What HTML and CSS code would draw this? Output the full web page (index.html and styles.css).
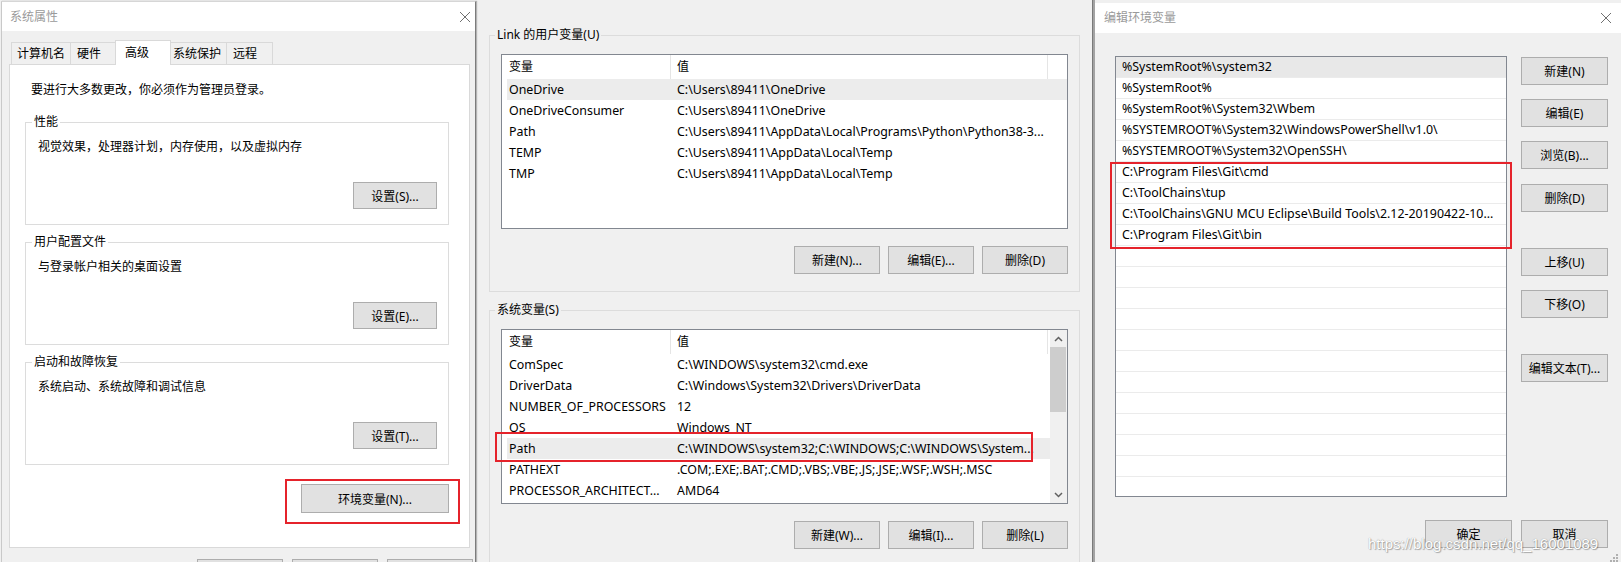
FILE: index.html
```html
<!DOCTYPE html>
<html>
<head>
<meta charset="utf-8">
<title>系统属性 - 环境变量</title>
<link rel="stylesheet" href="styles.css">
</head>
<body>
<div class="desk">

  <!-- 系统属性 -->
  <div class="win win-sys">
    <div class="titlebar">
      <span class="title">系统属性</span>
      <svg class="close" width="10" height="10" viewBox="0 0 10 10"><path d="M0 0L10 10M10 0L0 10"/></svg>
    </div>
    <div class="sys-body">
      <div class="tabs">
        <div class="tab t-name">计算机名</div>
        <div class="tab t-hw">硬件</div>
        <div class="tab active">高级</div>
        <div class="tab t-prot">系统保护</div>
        <div class="tab t-remote">远程</div>
      </div>
      <div class="tab-panel">
        <p class="intro">要进行大多数更改，你必须作为管理员登录。</p>
        <div class="group">
          <span class="legend">性能</span>
          <p class="group-text">视觉效果，处理器计划，内存使用，以及虚拟内存</p>
          <button class="btn">设置(S)...</button>
        </div>
        <div class="group">
          <span class="legend">用户配置文件</span>
          <p class="group-text">与登录帐户相关的桌面设置</p>
          <button class="btn">设置(E)...</button>
        </div>
        <div class="group">
          <span class="legend">启动和故障恢复</span>
          <p class="group-text">系统启动、系统故障和调试信息</p>
          <button class="btn">设置(T)...</button>
        </div>
        <div class="mark mark-env"><button class="btn btn-env">环境变量(N)...</button></div>
      </div>
      <!-- OK / Cancel / Apply, cut off by the bottom edge -->
      <div class="dlg-btns">
        <button class="btn"></button>
        <button class="btn"></button>
        <button class="btn"></button>
      </div>
    </div>
  </div>

  <!-- 环境变量 -->
  <div class="win win-env">
    <div class="varbox">
      <span class="legend">Link 的用户变量(U)</span>
      <div class="lv">
        <div class="lv-main">
          <div class="lv-head"><span>变量</span><span>值</span></div>
          <div class="lv-row sel"><span>OneDrive</span><span>C:\Users\89411\OneDrive</span></div>
          <div class="lv-row"><span>OneDriveConsumer</span><span>C:\Users\89411\OneDrive</span></div>
          <div class="lv-row"><span>Path</span><span>C:\Users\89411\AppData\Local\Programs\Python\Python38-3...</span></div>
          <div class="lv-row"><span>TEMP</span><span>C:\Users\89411\AppData\Local\Temp</span></div>
          <div class="lv-row"><span>TMP</span><span>C:\Users\89411\AppData\Local\Temp</span></div>
        </div>
      </div>
      <div class="lv-btns">
        <button class="btn">新建(N)...</button>
        <button class="btn">编辑(E)...</button>
        <button class="btn">删除(D)</button>
      </div>
    </div>
    <div class="varbox">
      <span class="legend">系统变量(S)</span>
      <div class="lv">
        <div class="lv-main">
          <div class="lv-head"><span>变量</span><span>值</span></div>
          <div class="lv-row"><span>ComSpec</span><span>C:\WINDOWS\system32\cmd.exe</span></div>
          <div class="lv-row"><span>DriverData</span><span>C:\Windows\System32\Drivers\DriverData</span></div>
          <div class="lv-row"><span>NUMBER_OF_PROCESSORS</span><span>12</span></div>
          <div class="lv-row"><span>OS</span><span>Windows_NT</span></div>
          <div class="lv-row sel"><span>Path</span><span>C:\WINDOWS\system32;C:\WINDOWS;C:\WINDOWS\System...</span></div>
          <div class="lv-row"><span>PATHEXT</span><span>.COM;.EXE;.BAT;.CMD;.VBS;.VBE;.JS;.JSE;.WSF;.WSH;.MSC</span></div>
          <div class="lv-row"><span>PROCESSOR_ARCHITECT...</span><span>AMD64</span></div>
        </div>
        <div class="scroll">
          <div class="sb-btn"><svg width="9" height="6" viewBox="0 0 9 6"><path d="M1 5L4.5 1.5L8 5"/></svg></div>
          <div class="sb-thumb"></div>
          <div class="sb-track"></div>
          <div class="sb-btn"><svg width="9" height="6" viewBox="0 0 9 6"><path d="M1 1L4.5 4.5L8 1"/></svg></div>
        </div>
        <div class="mark mark-path"></div>
      </div>
      <div class="lv-btns">
        <button class="btn">新建(W)...</button>
        <button class="btn">编辑(I)...</button>
        <button class="btn">删除(L)</button>
      </div>
    </div>
  </div>

  <div class="edge"></div>

  <!-- 编辑环境变量 -->
  <div class="win win-edit">
    <div class="titlebar">
      <span class="title">编辑环境变量</span>
      <svg class="close" width="10" height="10" viewBox="0 0 10 10"><path d="M0 0L10 10M10 0L0 10"/></svg>
    </div>
    <div class="edit-body">
      <div class="edit-main">
        <div class="pathlist">
          <div class="pl-rows">
            <div class="pl-row sel">%SystemRoot%\system32</div>
            <div class="pl-row">%SystemRoot%</div>
            <div class="pl-row">%SystemRoot%\System32\Wbem</div>
            <div class="pl-row">%SYSTEMROOT%\System32\WindowsPowerShell\v1.0\</div>
            <div class="pl-row">%SYSTEMROOT%\System32\OpenSSH\</div>
            <div class="pl-row">C:\Program Files\Git\cmd</div>
            <div class="pl-row">C:\ToolChains\tup</div>
            <div class="pl-row">C:\ToolChains\GNU MCU Eclipse\Build Tools\2.12-20190422-10...</div>
            <div class="pl-row">C:\Program Files\Git\bin</div>
            <div class="pl-row"></div>
            <div class="pl-row"></div>
            <div class="pl-row"></div>
            <div class="pl-row"></div>
            <div class="pl-row"></div>
            <div class="pl-row"></div>
            <div class="pl-row"></div>
            <div class="pl-row"></div>
            <div class="pl-row"></div>
            <div class="pl-row"></div>
            <div class="pl-row"></div>
            <div class="pl-row"></div>
            <div class="pl-row"></div>
          </div>
          <div class="mark mark-paths"></div>
        </div>
        <div class="side-btns">
          <button class="btn first">新建(N)</button>
          <button class="btn">编辑(E)</button>
          <button class="btn">浏览(B)...</button>
          <button class="btn mid">删除(D)</button>
          <button class="btn far">上移(U)</button>
          <button class="btn">下移(O)</button>
          <button class="btn far">编辑文本(T)...</button>
        </div>
      </div>
      <div class="edit-foot">
        <button class="btn">确定</button>
        <button class="btn">取消</button>
      </div>
    </div>
    <div class="watermark">https://blog.csdn.net/qq_16001089</div>
    <svg class="grip" width="12" height="8" viewBox="0 0 12 8">
      <rect x="9" y="0" width="2" height="2"/>
      <rect x="6" y="3" width="2" height="2"/><rect x="9" y="3" width="2" height="2"/>
      <rect x="3" y="6" width="2" height="2"/><rect x="6" y="6" width="2" height="2"/><rect x="9" y="6" width="2" height="2"/>
    </svg>
  </div>

</div>
</body>
</html>
```

FILE: styles.css
```css
* {
    box-sizing: border-box;
}
html, body {
    margin: 0;
    padding: 0;
}
body {
    width: 1621px;
    height: 562px;
    overflow: hidden;
    background: #f0f0f0;
    font: 12px "Noto Sans", "Noto Sans CJK SC", sans-serif;
    color: #000;
}
p {
    margin: 0;
}
.desk {
    display: flex;
    align-items: flex-start;
    height: 562px;
    padding-left: 1px;
}

/* common bits */
.titlebar {
    display: flex;
    align-items: center;
    justify-content: space-between;
    background: #fff;
}
.title {
    color: #9a9a9a;
    line-height: 16px;
}
.close path {
    stroke: #707070;
    stroke-width: 1;
    fill: none;
}
.btn {
    display: flex;
    align-items: center;
    justify-content: center;
    padding: 0;
    background: #e1e1e1;
    border: 1px solid #adadad;
    font: inherit;
    color: #000;
    flex: none;
}
.legend {
    align-self: flex-start;
    margin: -9px 0 0 -6px;
    padding: 0 2px;
    line-height: 16px;
    background: #fff;
}
.mark {
    border: 2px solid #e5232b;
}

/* system properties */
.win-sys {
    width: 475px;
    height: 561px;
    margin-top: 1px;
    border-top: 1px solid #d6d6d6;
    border-left: 1px solid #c9c9c9;
    border-right: 1px solid #7c7c7c;
    box-shadow: 1px 0 1px rgba(0, 0, 0, 0.25);
    position: relative;
    z-index: 1;
}
.win-sys .titlebar {
    height: 29px;
    padding: 0 5px 0 8px;
}
.sys-body {
    padding: 9px 5px 0 7px;
}
.tabs {
    display: flex;
    align-items: flex-end;
    height: 24px;
    padding-left: 2px;
}
.tab {
    height: 22px;
    margin-right: -1px;
    padding-left: 5px;
    border: 1px solid #d9d9d9;
    border-bottom: 0;
    line-height: 21px;
    background: #f0f0f0;
    white-space: nowrap;
}
.t-name { width: 60px; }
.t-hw { width: 48px; padding-left: 6px; }
.t-prot { width: 59px; padding-left: 4px; }
.t-remote { width: 47px; padding-left: 6px; }
.tab.active {
    position: relative;
    width: 56px;
    height: 25px;
    margin: 0 -3px -1px -2px;
    padding-left: 9px;
    line-height: 23px;
    background: #fff;
}
.tab-panel {
    display: flex;
    flex-direction: column;
    width: 461px;
    height: 484px;
    padding: 17px 0 0 15px;
    background: #fff;
    border: 1px solid #d9d9d9;
}
.intro {
    margin: 0 0 7px 6px;
    line-height: 16px;
}
.group {
    display: flex;
    flex-direction: column;
    width: 424px;
    height: 103px;
    margin-top: 17px;
    padding: 0 11px 15px 12px;
    border: 1px solid #dcdcdc;
}
.group-text {
    margin-top: 9px;
    line-height: 16px;
}
.group .btn {
    margin-top: auto;
    align-self: flex-end;
    width: 84px;
    height: 27px;
}
.mark-env {
    align-self: flex-end;
    margin: 14px 9px 0 0;
    padding: 3px 9px 9px 14px;
}
.btn-env {
    width: 148px;
    height: 29px;
}
.dlg-btns {
    display: flex;
    gap: 9px;
    margin-top: 11px;
    padding-left: 188px;
}
.dlg-btns .btn {
    width: 86px;
    height: 27px;
}

/* environment variables */
.win-env {
    width: 616px;
    height: 562px;
    padding: 35px 0 0 13px;
}
.varbox {
    display: flex;
    flex-direction: column;
    width: 591px;
    height: 257px;
    padding: 0 11px;
    border: 1px solid #dcdcdc;
}
.varbox + .varbox {
    margin-top: 18px;
}
.varbox .legend {
    background: #f0f0f0;
}
.lv {
    position: relative;
    display: flex;
    height: 175px;
    margin-top: 11px;
    background: #fff;
    border: 1px solid #828790;
}
.lv-main {
    flex: 1;
    padding-left: 5px;
}
.lv-head, .lv-row {
    display: grid;
    grid-template-columns: 164px 377px;
}
.lv-head {
    height: 24px;
    line-height: 24px;
}
.lv-row {
    height: 21px;
    line-height: 21px;
    font-size: 12.4px;
}
.lv-row.sel {
    background: #ececec;
}
.lv-head span, .lv-row span {
    padding-left: 2px;
    white-space: nowrap;
    overflow: hidden;
}
.lv-head span {
    border-right: 1px solid #e5e5e5;
}
.lv-head span + span, .lv-row span + span {
    padding-left: 6px;
}
.scroll {
    display: flex;
    flex-direction: column;
    width: 17px;
    background: #f0f0f0;
}
.sb-btn {
    display: flex;
    align-items: center;
    justify-content: center;
    height: 17px;
}
.sb-btn path {
    fill: none;
    stroke: #606060;
    stroke-width: 1.5;
}
.sb-thumb {
    height: 65px;
    margin-right: 1px;
    background: #cdcdcd;
}
.sb-track {
    flex: 1;
}
.mark-path {
    position: absolute;
    left: -7px;
    top: 102px;
    width: 538px;
    height: 30px;
}
.lv-btns {
    display: flex;
    justify-content: flex-end;
    gap: 8px;
    margin-top: 17px;
}
.lv-btns .btn {
    width: 86px;
    height: 28px;
}
.edge {
    width: 3px;
    height: 562px;
    background: #a3a3a3;
    border-left: 1px solid #7a7a7a;
}

/* edit path */
.win-edit {
    position: relative;
    width: 526px;
    height: 559px;
    margin-top: 3px;
}
.win-edit .titlebar {
    height: 30px;
    padding: 0 10px 0 9px;
}
.edit-body {
    padding: 23px 13px 0 20px;
}
.edit-main {
    display: flex;
    align-items: flex-start;
}
.pathlist {
    position: relative;
    width: 392px;
    height: 441px;
    background: #fff;
    border: 1px solid #828790;
}
.pl-rows {
    height: 100%;
    overflow: hidden;
}
.pl-row {
    height: 21px;
    padding-left: 6px;
    border-bottom: 1px solid #ebebeb;
    line-height: 20px;
    font-size: 12.4px;
    white-space: nowrap;
    overflow: hidden;
}
.pl-row.sel {
    background: #e8e8e8;
}
.mark-paths {
    position: absolute;
    left: -6px;
    top: 105px;
    width: 402px;
    height: 87px;
}
.side-btns {
    display: flex;
    flex-direction: column;
    margin-left: 14px;
}
.side-btns .btn {
    width: 87px;
    height: 28px;
    margin-top: 14px;
}
.side-btns .first { margin-top: 1px; }
.side-btns .mid { margin-top: 15px; }
.side-btns .far { margin-top: 36px; }
.edit-foot {
    display: flex;
    justify-content: flex-end;
    gap: 9px;
    margin-top: 23px;
}
.edit-foot .btn {
    width: 87px;
    height: 28px;
}
.watermark {
    position: absolute;
    left: 273px;
    top: 532px;
    font: 15px "Liberation Sans", Arial, sans-serif;
    color: #fff;
    text-shadow: 0 0 1px #888, 1px 1px 1px rgba(0, 0, 0, 0.3);
}
.grip {
    position: absolute;
    right: 2px;
    bottom: 0;
    fill: #b0b0b0;
}
```
